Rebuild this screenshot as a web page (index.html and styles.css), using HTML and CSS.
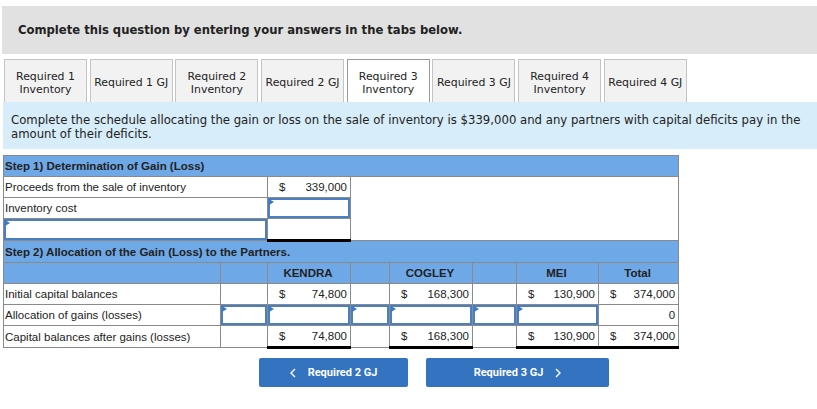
FILE: index.html
```html
<!DOCTYPE html>
<html>
<head>
<meta charset="utf-8">
<link rel="stylesheet" href="styles.css">
</head>
<body>
<div class="page">
  <div class="banner">Complete this question by entering your answers in the tabs below.</div>
  <div class="tabs">
    <div class="tab">Required 1<br>Inventory</div>
    <div class="tab">Required 1 GJ</div>
    <div class="tab">Required 2<br>Inventory</div>
    <div class="tab">Required 2 GJ</div>
    <div class="tab active">Required 3<br>Inventory</div>
    <div class="tab">Required 3 GJ</div>
    <div class="tab">Required 4<br>Inventory</div>
    <div class="tab">Required 4 GJ</div>
  </div>
  <div class="prompt">Complete the schedule allocating the gain or loss on the sale of inventory is $339,000 and any partners with capital deficits pay in the amount of their deficits.</div>
  <table class="sched">
    <colgroup>
      <col class="w-label"><col class="w-c1"><col class="w-kendra"><col class="w-c3"><col class="w-cogley"><col class="w-c5"><col class="w-mei"><col class="w-total">
    </colgroup>
    <tr class="head"><td colspan="8" class="title">Step 1) Determination of Gain (Loss)</td></tr>
    <tr>
      <td colspan="2" class="label">Proceeds from the sale of inventory</td>
      <td class="val"><span class="cur">$</span><span class="num">339,000</span></td>
      <td colspan="5" class="blank"></td>
    </tr>
    <tr>
      <td colspan="2" class="label">Inventory cost</td>
      <td class="inp"><div class="box"></div></td>
      <td colspan="5" class="blank"></td>
    </tr>
    <tr>
      <td colspan="2" class="inp"><div class="box"></div></td>
      <td class="val total"></td>
      <td colspan="5" class="blank"></td>
    </tr>
    <tr class="head"><td colspan="8" class="title">Step 2) Allocation of the Gain (Loss) to the Partners.</td></tr>
    <tr class="head cols">
      <td></td><td></td><td>KENDRA</td><td></td><td>COGLEY</td><td></td><td>MEI</td><td>Total</td>
    </tr>
    <tr>
      <td class="label">Initial capital balances</td>
      <td></td>
      <td class="val"><span class="cur">$</span><span class="num">74,800</span></td>
      <td></td>
      <td class="val"><span class="cur">$</span><span class="num">168,300</span></td>
      <td></td>
      <td class="val"><span class="cur">$</span><span class="num">130,900</span></td>
      <td class="val"><span class="cur">$</span><span class="num">374,000</span></td>
    </tr>
    <tr>
      <td class="label">Allocation of gains (losses)</td>
      <td class="inp"><div class="box"></div></td>
      <td class="inp"><div class="box"></div></td>
      <td class="inp"><div class="box"></div></td>
      <td class="inp"><div class="box"></div></td>
      <td class="inp"><div class="box"></div></td>
      <td class="inp"><div class="box"></div></td>
      <td class="val"><span class="num">0</span></td>
    </tr>
    <tr>
      <td class="label">Capital balances after gains (losses)</td>
      <td></td>
      <td class="val total"><span class="cur">$</span><span class="num">74,800</span></td>
      <td></td>
      <td class="val total"><span class="cur">$</span><span class="num">168,300</span></td>
      <td></td>
      <td class="val total"><span class="cur">$</span><span class="num">130,900</span></td>
      <td class="val total"><span class="cur">$</span><span class="num">374,000</span></td>
    </tr>
  </table>
  <div class="nav">
    <button class="btn prev"><svg class="chev" viewBox="0 0 6 10" width="6" height="10"><path d="M5 1 L1 5 L5 9" fill="none" stroke="#fff" stroke-width="1.4"/></svg><span>Required 2 GJ</span></button>
    <button class="btn next"><span>Required 3 GJ</span><svg class="chev" viewBox="0 0 6 10" width="6" height="10"><path d="M1 1 L5 5 L1 9" fill="none" stroke="#fff" stroke-width="1.4"/></svg></button>
  </div>
</div>
</body>
</html>
```

FILE: styles.css
```css
html, body {
  margin: 0;
  padding: 0;
  background: #fff;
}
.page {
  padding: 6px 0 0 2px;
  font-family: "DejaVu Sans", Verdana, sans-serif;
  color: #222;
}
.banner {
  background: #e1e1e1;
  height: 48px;
  box-sizing: border-box;
  padding: 17px 0 0 16px;
  font-size: 11.6px;
  font-weight: bold;
  line-height: 14px;
}
.tabs {
  display: flex;
  gap: 2.7px;
  margin: 5px 0 0 2px;
  height: 43px;
}
.tab {
  width: 83px;
  box-sizing: border-box;
  border: 1px solid #c4c4c4;
  border-bottom: none;
  background: #f2f2f2;
  display: flex;
  align-items: center;
  justify-content: center;
  text-align: center;
  padding-top: 3px;
  font-size: 10.9px;
  line-height: 13px;
  color: #222;
}
.tab.active {
  background: #fff;
  border-color: #9a9a9a;
}
.prompt {
  background: #d7edf9;
  margin-left: 1px;
  height: 47px;
  box-sizing: border-box;
  padding: 11px 8px 0 8px;
  font-size: 11.7px;
  line-height: 14px;
}
.sched {
  margin: 6px 0 0 1px;
  border-collapse: collapse;
  table-layout: fixed;
  width: 675px;
  font-family: "Liberation Sans", Arial, sans-serif;
  font-size: 11.5px;
  color: #222;
}
.w-label { width: 217px; }
.w-c1 { width: 47px; }
.w-kendra { width: 83px; }
.w-c3 { width: 39px; }
.w-cogley { width: 83px; }
.w-c5 { width: 44px; }
.w-mei { width: 82px; }
.w-total { width: 80px; }
.sched td {
  border: 1px solid #8a8a8a;
  height: 20px;
  padding: 0 3px 0 1px;
  white-space: nowrap;
}
.sched td.blank {
  border: none;
  border-right: 1px solid #8a8a8a;
}
.head td {
  background: #6fa8e6;
  font-weight: bold;
}
.cols td {
  text-align: center;
}
.val {
  position: relative;
  text-align: right;
}
.val .cur {
  float: left;
  padding-left: 10px;
}
.sched td.total {
  border-bottom: 3px solid #000;
}
.sched td.inp {
  padding: 0;
  position: relative;
}
.box {
  position: absolute;
  inset: 0;
  border: 2px solid #4a7fc3;
  background: #fff;
}
.box::before {
  content: "";
  position: absolute;
  left: -1px;
  top: -1px;
  border-left: 5px solid #3c78c8;
  border-top: 3px solid transparent;
  border-bottom: 3px solid transparent;
}
.nav {
  display: flex;
  gap: 18px;
  margin: 9px 0 0 257px;
}
.btn {
  height: 29px;
  border: none;
  border-radius: 2px;
  background: #3373bf;
  color: #fff;
  font-family: Roboto, "Liberation Sans", Arial, sans-serif;
  font-weight: bold;
  font-size: 11px;
  display: flex;
  align-items: center;
  justify-content: center;
  gap: 12px;
  padding: 0;
}
.btn.prev { width: 149px; }
.btn.next { width: 183px; }
```
